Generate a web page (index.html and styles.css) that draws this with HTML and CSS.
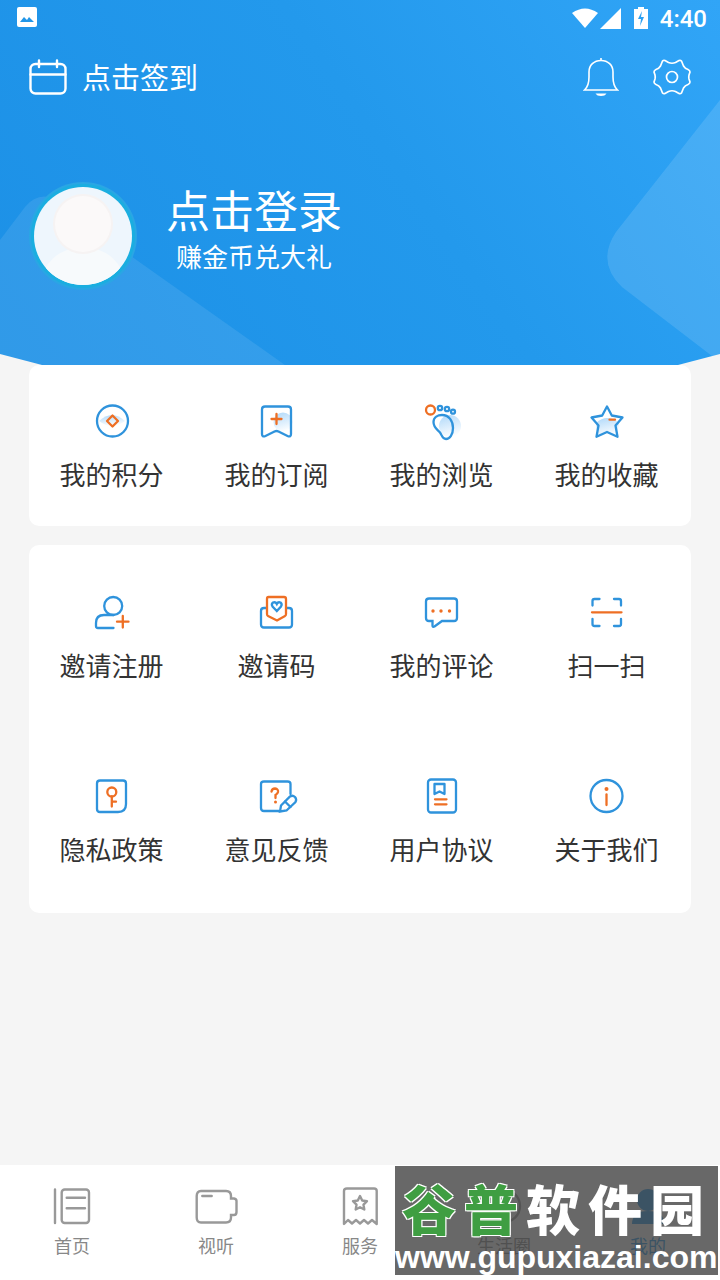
FILE: index.html
```html
<!DOCTYPE html>
<html lang="zh-CN">
<head>
  <meta charset="UTF-8">
  <title>我的</title>
  <link rel="stylesheet" href="styles.css">
</head>
<body>

  <header class="top">
    <svg class="top-bg" width="720" height="365" viewBox="0 0 720 365">
      <path d="M0 240 L25 207 Q35 194 50 197 L80 220 L285 365 H0 Z" fill="#fff" opacity="0.09"/>
      <path d="M720 100 L616 232 Q596 262 622 287 L712 356 L720 365 Z" fill="#fff" opacity="0.12"/>
      <path d="M0 354 L42 365 H0 Z" fill="#f5f5f5"/>
      <path d="M720 354 L678 365 H720 Z" fill="#f5f5f5"/>
    </svg>

    <div class="status">
      <svg width="20" height="20" viewBox="0 0 20 20"><path fill="#fff" d="M2 0h16a2 2 0 0 1 2 2v16a2 2 0 0 1-2 2H2a2 2 0 0 1-2-2V2a2 2 0 0 1 2-2z"/><path fill="#2196e8" d="M3 15l4-5 3 3 2-3 5 5z"/></svg>
      <div class="status-right">
        <svg width="26" height="20" viewBox="0 0 26 20"><path fill="#fff" d="M0 5Q13-4 26 5L13 20Z"/></svg>
        <svg width="21" height="21" viewBox="0 0 21 21"><path fill="#fff" d="M21 0V21H0Z"/></svg>
        <svg class="batt" width="14" height="22" viewBox="0 0 14 22"><path fill="#fff" d="M4 0h6v2h4v20H0V2h4z"/><path fill="#2ba0f2" d="M8 4L4 12h3l-1 7 4-9H7z"/></svg>
        <span class="time">4:40</span>
      </div>
    </div>

    <div class="toolbar">
      <div class="checkin">
        <svg width="38" height="36" viewBox="0 0 38 36" fill="none" stroke="#fff" stroke-width="2.4" stroke-linecap="round"><rect x="1.5" y="5" width="35" height="29.5" rx="5"/><path d="M1.5 15.5H36.5M10 1.5V8M28 1.5V8"/></svg>
        <span class="checkin-text">点击签到</span>
      </div>
      <div class="tools">
        <svg width="36" height="40" viewBox="0 0 36 40" fill="none" stroke="#fff" stroke-width="1.6"><path d="M1.5 33C5 30 6 27 6 20V15C6 8 11 3.500 18 3.500S30 8 30 15V20C30 27 31 30 34.500 33Z"/><path d="M18 1V3.500"/><path d="M12.500 36.500H23.500Q22 39 18 39T12.500 36.500Z" fill="#fff" stroke="none"/></svg>
        <svg width="40" height="38" viewBox="0 0 40 38" fill="none" stroke="#fff" stroke-width="1.7" stroke-linejoin="round"><path d="M13 2.500L16.500 4.500Q20 6 23.500 4.500L27 2.500Q28.500 2 29.500 3L31.500 8Q33 10.500 36 11.500Q38 12.500 38 14L37 17Q36.500 19 37 21L38 24Q38 25.500 36 26.500Q33 27.500 31.500 30L29.500 35Q28.500 36 27 35.500L23.500 33.500Q20 32 16.500 33.500L13 35.500Q11.500 36 10.500 35L8.500 30Q7 27.500 4 26.500Q2 25.500 2 24L3 21Q3.500 19 3 17L2 14Q2 12.500 4 11.500Q7 10.500 8.500 8L10.500 3Q11.500 2 13 2.500Z"/><circle cx="20" cy="19" r="5.500"/></svg>
      </div>
    </div>

    <div class="profile">
      <svg class="avatar" width="110" height="110" viewBox="0 0 110 110">
        <defs><clipPath id="face"><circle cx="55" cy="55" r="49"/></clipPath></defs>
        <circle cx="55" cy="55" r="54" fill="#2aa6e4"/>
        <circle cx="55" cy="55" r="52" fill="#1aaee0"/>
        <circle cx="55" cy="55" r="49" fill="#eef6fd"/>
        <g clip-path="url(#face)">
          <ellipse cx="55" cy="104" rx="42" ry="38" fill="#f7fafc"/>
          <circle cx="55" cy="43" r="30" fill="#f6f3f3"/>
          <circle cx="55" cy="43" r="28" fill="#fbf9f9"/>
        </g>
      </svg>
      <div class="login">
        <div class="login-name">点击登录</div>
        <div class="login-sub">赚金币兑大礼</div>
      </div>
    </div>
  </header>

  <main class="content">
    <section class="card card-short">
      <div class="item">
        <svg class="ico" viewBox="0 0 44 44">
          <defs>
            <linearGradient id="blob" x1="0.3" y1="0" x2="0.6" y2="1"><stop offset="0" stop-color="#b5dbfa"/><stop offset="1" stop-color="#fff"/></linearGradient>
          </defs>
          <path class="fill" d="M9 22Q22 10 35 22Q22 32 9 22Z"/>
          <circle class="b" cx="22.500" cy="22" r="15.500"/>
          <path class="o" d="M22.500 16.500L28 22L22.500 27.500L17 22Z" stroke-linejoin="round"/>
        </svg>
        <span>我的积分</span>
      </div>
      <div class="item">
        <svg class="ico" viewBox="0 0 44 44">
          <circle class="fill" cx="28" cy="23" r="9.500"/>
          <path class="b" d="M10 7.500H33Q36 7.500 36 10.500V35Q36 38.500 32.500 37L23.500 32.500Q21.500 31.500 19.500 32.500L10.500 37Q7 38.500 7 35V10.500Q7 7.500 10 7.500Z"/>
          <path class="o" d="M21.500 15V25M16.500 20H26.500"/>
        </svg>
        <span>我的订阅</span>
      </div>
      <div class="item">
        <svg class="ico" viewBox="0 0 44 44">
          <circle class="fill" cx="30" cy="27" r="11"/>
          <circle class="o" cx="10.500" cy="11" r="4.500"/>
          <circle class="b" cx="20" cy="9" r="2.200"/>
          <circle class="b" cx="27" cy="10" r="2.200"/>
          <circle class="b" cx="33" cy="12.700" r="2"/>
          <path class="b" d="M13.500 23C13.500 18 18 16 22 16C29 16 33 22 33 29C33 36 29.500 40 26 40C22 40 22 36 20 33.500C18 31 13.500 29 13.500 23Z"/>
        </svg>
        <span>我的浏览</span>
      </div>
      <div class="item">
        <svg class="ico" viewBox="0 0 44 44">
          <path class="fill" d="M11 24Q22 14 34 24L32 37L22 33L12 37Z"/>
          <path class="b" stroke-linejoin="round" d="M22 7.500L26.800 16.500L37.500 18.500L30.500 26.500L32.500 37.800L22 33L11.500 37.800L13.500 26.500L6.500 18.500L17.200 16.500Z"/>
          <path class="o" d="M24.500 20.700H30"/>
        </svg>
        <span>我的收藏</span>
      </div>
    </section>

    <section class="card card-tall">
      <div class="item">
        <svg class="ico" viewBox="0 0 44 44">
          <circle class="b" cx="23.200" cy="16" r="9"/>
          <path class="b" d="M23.500 25H14Q6 25 6 33V36Q6 38 8 38H23.500"/>
          <path class="o" d="M27 31.700H38.500M32.800 26V37.500"/>
        </svg>
        <span>邀请注册</span>
      </div>
      <div class="item">
        <svg class="ico" viewBox="0 0 44 44">
          <path class="b" d="M11.500 18H9Q6 18 6 21V34.500Q6 37.500 9 37.500H34Q37 37.500 37 34.500V21Q37 18 34 18H31.500"/>
          <path class="o" d="M13.500 7H29Q31 7 31 9V24Q31 25.500 30 26L22 30.500L13 26Q12 25.500 12 24V9Q12 7 13.500 7Z"/>
          <path class="b" d="M21.800 21L17.500 16.500Q16 14 18 12.500Q20.500 11.500 21.800 14Q23 11.500 25.500 12.500Q27.500 14 26 16.500Z"/>
        </svg>
        <span>邀请码</span>
      </div>
      <div class="item">
        <svg class="ico" viewBox="0 0 44 44">
          <path class="b" d="M9 8.500H34Q37 8.500 37 11.500V28Q37 31 34 31H22L14.500 36.500Q12.500 37.500 12.500 35.500V31H9Q6 31 6 28V11.500Q6 8.500 9 8.500Z"/>
          <circle class="dot" cx="13" cy="21" r="1.700"/>
          <circle class="dot" cx="21" cy="21" r="1.700"/>
          <circle class="dot" cx="29.500" cy="21" r="1.700"/>
        </svg>
        <span>我的评论</span>
      </div>
      <div class="item">
        <svg class="ico" viewBox="0 0 44 44">
          <path class="b" d="M14.500 9H9.500Q7.500 9 7.500 11V15.500M29 9H34Q36 9 36 11V15.500M7.500 29V34Q7.500 36 9.500 36H14.500M36 29V34Q36 36 34 36H29"/>
          <path class="o" d="M7 22.300H36.500"/>
        </svg>
        <span>扫一扫</span>
      </div>

      <div class="item">
        <svg class="ico" viewBox="0 0 44 44">
          <path class="b" d="M10 6.500H33Q36 6.500 36 9.500V30Q36 38 28 38H10Q7 38 7 35V9.500Q7 6.500 10 6.500Z"/>
          <circle class="o" cx="21.800" cy="18" r="4.500"/>
          <path class="o" d="M21.800 22.500V32.500M21.800 27.700H26"/>
        </svg>
        <span>隐私政策</span>
      </div>
      <div class="item">
        <svg class="ico" viewBox="0 0 44 44">
          <path class="b" d="M24 37H9Q6 37 6 34V10Q6 7.500 9 7.500H32.500Q35.500 7.500 35.500 10V20"/>
          <path class="o" d="M16.500 17.500Q17 14.500 20 14.500Q23.500 15 23 18Q22.500 20 20.500 21V24"/>
          <circle class="dot" cx="20.500" cy="28" r="1.500"/>
          <path class="b" d="M26 31.500L35 22.500Q37.500 20.800 40 23Q42 25.500 40.500 28L31.500 36.500L25 37.500Z"/>
          <path class="b" d="M30 27.500L35.500 33"/>
        </svg>
        <span>意见反馈</span>
      </div>
      <div class="item">
        <svg class="ico" viewBox="0 0 44 44">
          <rect class="b" x="8" y="5.500" width="28" height="33" rx="3"/>
          <path class="b" d="M14.500 10H24.500V20L19.500 17.500L14.500 20Z" stroke-linejoin="round"/>
          <path class="o" d="M15 25.300H26.500M15 30.300H26.500"/>
        </svg>
        <span>用户协议</span>
      </div>
      <div class="item">
        <svg class="ico" viewBox="0 0 44 44">
          <circle class="b" cx="21.500" cy="22" r="16"/>
          <circle class="dot" cx="21.500" cy="15" r="2"/>
          <path class="o" d="M21.500 20.500V31"/>
        </svg>
        <span>关于我们</span>
      </div>
    </section>
  </main>

  <nav class="tabs">
    <div class="tab">
      <svg class="tab-ico" viewBox="0 0 44 44">
        <path d="M5 5.500V39M16.700 13.700H35M16.700 24.300H35"/>
        <rect x="11.700" y="5.500" width="27.300" height="33.500" rx="3"/>
      </svg>
      <span>首页</span>
    </div>
    <div class="tab">
      <svg class="tab-ico" viewBox="0 0 44 44">
        <path d="M7 7H32Q37 7 37 12V14.500H40Q42.500 15 42.500 17V28Q42.500 31 40 31H37V33.500Q37 38.500 32 38.500H7Q2.700 38.500 2.700 33.500V12Q2.700 7 7 7Z"/>
        <path d="M8.300 12H17.700"/>
      </svg>
      <span>视听</span>
    </div>
    <div class="tab">
      <svg class="tab-ico" viewBox="0 0 44 44">
        <path d="M6 40V7Q6 4.500 9 4.500H36Q38.700 4.500 38.700 7V40L34 36L30 39.500L26 36L22 39.500L18 36L14 39.500L10 36Z" stroke-linejoin="round"/>
        <path stroke-linejoin="round" d="M22 12L24.200 16.500L29 17.200L25.500 20.700L26.300 25.500L22 23.300L17.700 25.500L18.500 20.700L15 17.200L19.800 16.500Z"/>
      </svg>
      <span>服务</span>
    </div>
    <div class="tab">
      <svg class="tab-ico" viewBox="0 0 44 44">
        <circle cx="22" cy="22" r="16"/>
        <path d="M12 22H32M22 12V32"/>
      </svg>
      <span>生活圈</span>
    </div>
    <div class="tab tab-on">
      <svg class="tab-ico" viewBox="0 0 44 44">
        <circle class="tab-head" cx="22" cy="16" r="11"/>
        <path class="tab-head" d="M6 40Q6 27 22 27T38 40Z"/>
      </svg>
      <span>我的</span>
    </div>

    <div class="mark">
      <div class="mark-title"><b>谷普</b><span>软件园</span></div>
      <div class="mark-url">www.gupuxiazai.com</div>
    </div>
  </nav>

</body>
</html>
```

FILE: styles.css
```css
* {
  box-sizing: border-box;
}

body {
  margin: 0;
  width: 720px;
  height: 1280px;
  display: flex;
  flex-direction: column;
  overflow: hidden;
  background-color: #f5f5f5;
  font-family: "Noto Sans CJK SC", "Noto Sans", sans-serif;
}

svg {
  display: block;
}

/* Header */
.top {
  position: relative;
  height: 365px;
  flex: none;
  color: #fff;
  background: linear-gradient(55deg, #1c90e6, #2399ec 55%, #31a5f7);
}

.top-bg {
  position: absolute;
  top: 0;
  left: 0;
}

.status {
  position: relative;
  height: 36px;
  padding: 7px 13px 0 17px;
  display: flex;
  justify-content: space-between;
}

.status-right {
  display: flex;
  align-items: flex-start;
}

.status-right svg {
  margin-top: 1px;
  margin-right: 2px;
}

.status-right .batt {
  margin: 0 12px 0 11px;
}

.time {
  font-family: Roboto, sans-serif;
  font-size: 24px;
  font-weight: 500;
  line-height: 24px;
}

.toolbar {
  position: relative;
  margin-top: 21px;
  height: 40px;
  padding: 0 28px 0 29px;
  display: flex;
  justify-content: space-between;
  align-items: center;
}

.checkin {
  display: flex;
  align-items: center;
  gap: 15px;
  font-size: 29px;
  line-height: 40px;
}

.checkin-text {
  padding-bottom: 2px;
}

.tools {
  display: flex;
  align-items: center;
  gap: 33px;
}

.profile {
  position: relative;
  margin-top: 84px;
  padding-left: 28px;
  display: flex;
}

.login {
  margin-left: 28px;
  text-align: center;
}

.login-name {
  font-size: 44px;
  line-height: 56px;
}

.login-sub {
  margin-top: 1px;
  font-size: 26px;
  line-height: 36px;
}

/* Cards */
.content {
  flex: 1;
  padding: 0 29px;
}

.card {
  width: 662px;
  background-color: #fff;
  border-radius: 10px;
  display: grid;
  grid-template-columns: repeat(4, 165px);
  align-content: start;
}

.card-short {
  padding-top: 34px;
  height: 161px;
}

.card-tall {
  margin-top: 19px;
  padding-top: 45px;
  height: 368px;
  row-gap: 90px;
}

.item {
  display: flex;
  flex-direction: column;
  align-items: center;
  gap: 13px;
  height: 94px;
  font-size: 26px;
  line-height: 36px;
  color: #333;
}

.ico {
  width: 44px;
  height: 44px;
}

.ico .b,
.ico .o {
  fill: none;
  stroke-width: 2.3;
  stroke-linecap: round;
}

.ico .b {
  stroke: #2f93dc;
}

.ico .o {
  stroke: #ee6f24;
}

.ico .dot {
  fill: #ee6f24;
}

.ico .fill {
  fill: url(#blob);
}

/* Tab bar */
.tabs {
  position: relative;
  height: 115px;
  flex: none;
  padding-top: 19px;
  background-color: #fff;
  display: grid;
  grid-template-columns: repeat(5, 144px);
}

.tab {
  display: flex;
  flex-direction: column;
  align-items: center;
  gap: 4px;
  font-size: 18px;
  line-height: 26px;
  color: #888;
}

.tab-ico {
  width: 44px;
  height: 44px;
  fill: none;
  stroke: #999;
  stroke-width: 2.4;
  stroke-linecap: round;
}

.tab-on {
  color: #2196e8;
}

.tab-head {
  fill: #2196e8;
  stroke: none;
}

/* Watermark */
.mark {
  position: absolute;
  top: 1px;
  left: 395px;
  width: 323px;
  height: 109px;
  padding-top: 14px;
  background-color: rgba(66, 66, 66, 0.8);
  color: #fff;
}

.mark-title {
  padding-left: 7px;
  display: flex;
  font-size: 54px;
  line-height: 56px;
  font-weight: 900;
  letter-spacing: 8px;
  white-space: nowrap;
}

.mark-title b {
  font-weight: 900;
  color: #3f9e42;
  text-shadow: 1px 1px 0 #fff, -1px -1px 0 #fff, 1px -1px 0 #fff, -1px 1px 0 #fff;
}

.mark-url {
  margin-top: 3px;
  font-family: "Liberation Sans", sans-serif;
  font-size: 32px;
  line-height: 36px;
  font-weight: 700;
  white-space: nowrap;
}
```
